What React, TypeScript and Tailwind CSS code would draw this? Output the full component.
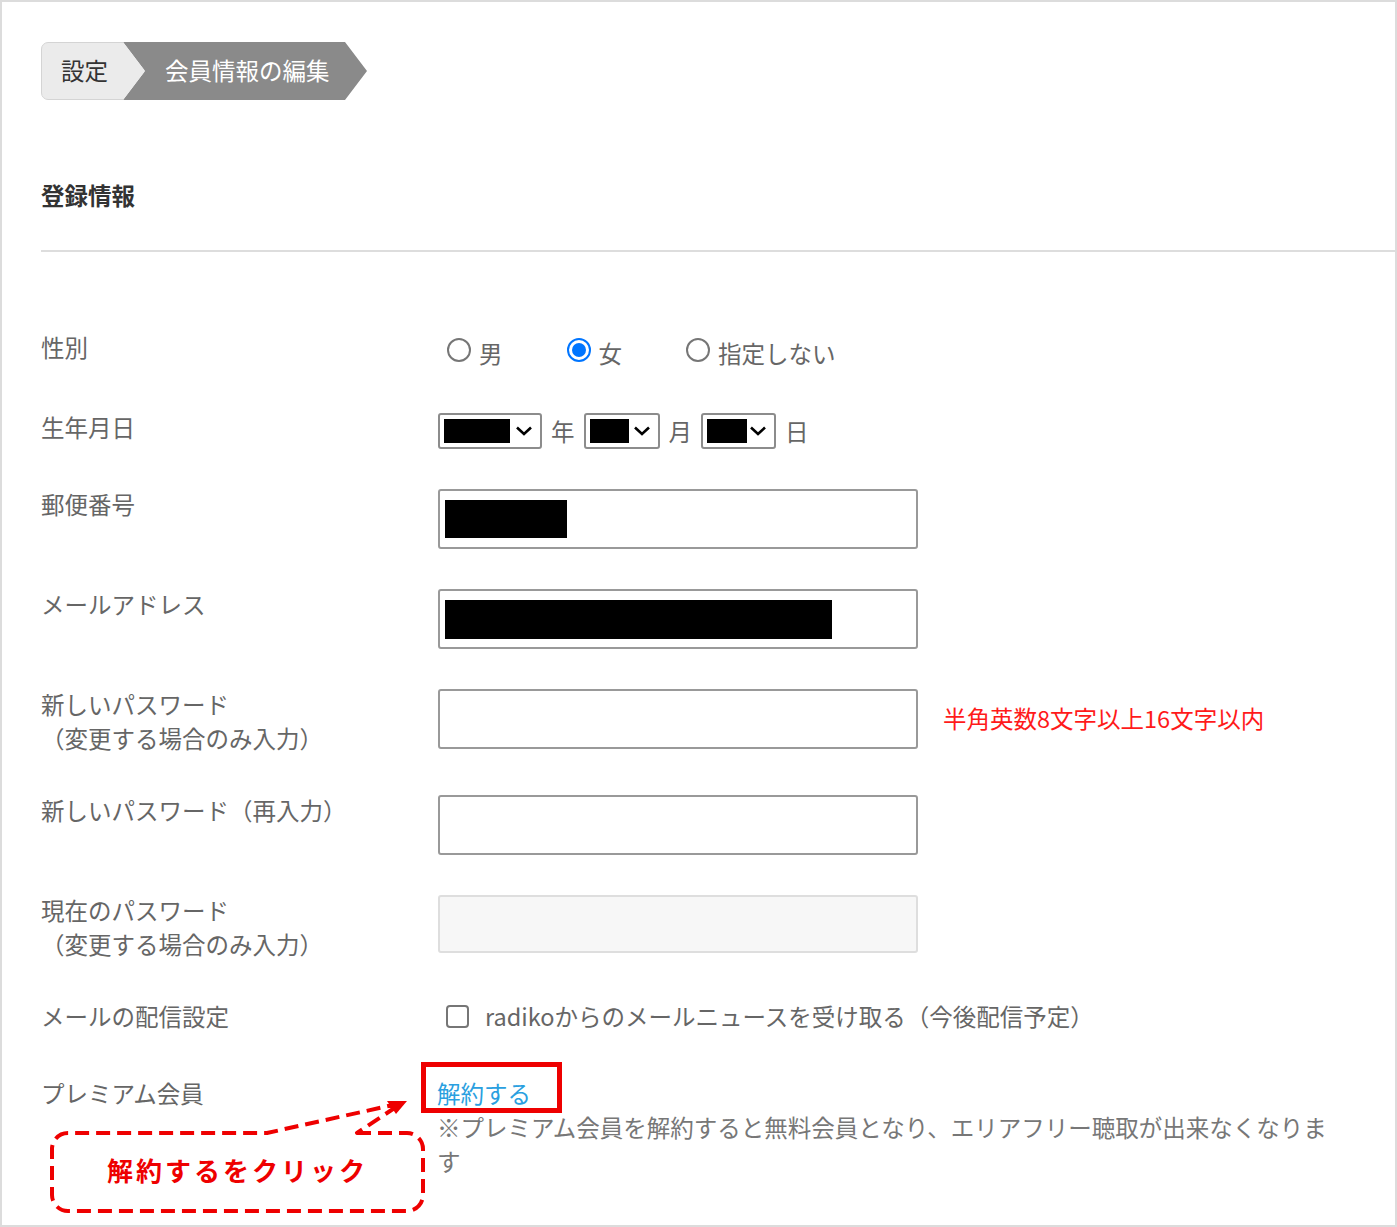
import React from 'react';

const Radio: React.FC<{ label: string; checked?: boolean }> = ({ label, checked }) => (
  <label className="flex items-center gap-[8px]">
    {checked ? (
      <span className="flex h-[24px] w-[24px] items-center justify-center rounded-full border-2 border-[#0075ff] bg-white">
        <span className="h-[14px] w-[14px] rounded-full bg-[#0075ff]" />
      </span>
    ) : (
      <span className="h-[24px] w-[24px] rounded-full border-2 border-[#767676] bg-white" />
    )}
    <span className="mt-[6px]">{label}</span>
  </label>
);

const Chevron = () => (
  <svg width="18" height="12" viewBox="0 0 18 12" className="shrink-0">
    <path d="M2 2.5 L9 9 L16 2.5" fill="none" stroke="#000" strokeWidth="2.6" />
  </svg>
);

const FakeSelect: React.FC<{ width: string; fill: string }> = ({ width, fill }) => (
  <div className={`${width} flex h-[36px] items-center justify-between rounded-[3px] border-2 border-[#8c8c8c] bg-white pl-[4px] pr-[7px]`}>
    <div className={`${fill} h-[24px] bg-black`} />
    <Chevron />
  </div>
);

const Field: React.FC<{ children?: React.ReactNode; disabled?: boolean }> = ({ children, disabled }) => (
  <div
    className={
      disabled
        ? 'mt-[2px] h-[58px] w-[480px] rounded-[3px] border-2 border-[#dedede] bg-[#f7f7f7]'
        : 'mt-[2px] flex h-[60px] w-[480px] items-center rounded-[3px] border-2 border-[#999] bg-white px-[5px]'
    }
  >
    {children}
  </div>
);

const Row: React.FC<{ label: React.ReactNode; children: React.ReactNode; className?: string }> = ({
  label,
  children,
  className,
}) => (
  <div className={`flex items-start ${className ?? ''}`}>
    <div className="w-[397px] shrink-0">{label}</div>
    <div className="relative flex-1">{children}</div>
  </div>
);

export default function App() {
  return (
    <div className="relative h-[1227px] w-[1397px] border-2 border-[#dcdcdc] bg-white font-['Noto_Sans_CJK_JP','Noto_Sans',sans-serif] text-[23.5px] leading-[34px] text-[#666]">
      <div className="pl-[39px] pt-[40px]">
        {/* breadcrumb */}
        <div className="flex h-[58px]">
          <div className="relative z-10 flex h-[58px] w-[104px] items-center rounded-l-[7px] border border-[#d4d4d4] bg-[#ebebeb] pb-[2px] pl-[19px] text-[#333] [clip-path:polygon(0_0,calc(100%_-_22px)_0,100%_50%,calc(100%_-_22px)_100%,0_100%)]">
            設定
          </div>
          <div className="ml-[-22px] flex h-[58px] w-[244px] items-center bg-[#8a8a8a] pb-[2px] pl-[42px] text-white [clip-path:polygon(0_0,calc(100%_-_22px)_0,100%_50%,calc(100%_-_22px)_100%,0_100%,22px_50%)]">
            会員情報の編集
          </div>
        </div>

        <h2 className="mt-[78px] font-bold text-[#333]">登録情報</h2>
        <div className="mt-[38px] h-[2px] bg-[#dddddd]" />

        <div className="mt-[78px] flex flex-col gap-[38px]">
          <Row label="性別">
            <div className="ml-[9px] flex gap-[64px]">
              <Radio label="男" />
              <Radio label="女" checked />
              <Radio label="指定しない" />
            </div>
          </Row>

          <Row label="生年月日" className="mt-[2px]">
            <div className="mt-[3px] flex items-center gap-[9px]">
              <FakeSelect width="w-[104px]" fill="w-[66px]" />
              <span>年</span>
              <FakeSelect width="w-[76px]" fill="w-[39px]" />
              <span>月</span>
              <FakeSelect width="w-[75px]" fill="w-[40px]" />
              <span>日</span>
            </div>
          </Row>

          <Row label="郵便番号">
            <Field>
              <div className="h-[38px] w-[122px] bg-black" />
            </Field>
          </Row>

          <Row label="メールアドレス">
            <Field>
              <div className="h-[39px] w-[387px] bg-black" />
            </Field>
          </Row>

          <Row
            label={
              <>
                新しいパスワード
                <br />
                （変更する場合のみ入力）
              </>
            }
          >
            <div className="flex items-center">
              <Field />
              <span className="ml-[25px] text-[#ff1a1a]">半角英数8文字以上16文字以内</span>
            </div>
          </Row>

          <Row label="新しいパスワード（再入力）">
            <Field />
          </Row>

          <Row
            label={
              <>
                現在のパスワード
                <br />
                （変更する場合のみ入力）
              </>
            }
          >
            <Field disabled />
          </Row>

          <Row label="メールの配信設定">
            <label className="ml-[8px] flex items-center gap-[16px]">
              <span className="h-[23px] w-[23px] rounded-[4px] border-2 border-[#767676] bg-white" />
              <span>radikoからのメールニュースを受け取る（今後配信予定）</span>
            </label>
          </Row>

          <Row label="プレミアム会員" className="mt-[5px]">
            <div className="ml-[-1px]">
              <a className="text-[#2a9fe0]">解約する</a>
              <p className="text-[#777]">
                ※プレミアム会員を解約すると無料会員となり、エリアフリー聴取が出来なくなりま
                <br />す
              </p>
            </div>
            <div className="pointer-events-none absolute left-[-17px] top-[-14px] h-[51px] w-[141px] border-[5px] border-[#ee0000]" />
          </Row>
        </div>
      </div>

      {/* callout annotation */}
      <svg
        className="pointer-events-none absolute left-[48px] top-[1095px]"
        width="380"
        height="122"
        viewBox="0 0 380 122"
      >
        <path
          d="M307 36 L357 36 A16 16 0 0 1 373 52 L373 98 A16 16 0 0 1 357 114 L18 114 A16 16 0 0 1 2 98 L2 52 A16 16 0 0 1 18 36 L217 36 L352 6 Z"
          fill="none"
          stroke="#ee0000"
          strokeWidth="4"
          strokeDasharray="14 7"
          strokeLinejoin="round"
        />
        <path d="M357 4 L337 4 L346 17 Z" fill="#ee0000" />
      </svg>
      <div className="absolute left-[50px] top-[1129px] flex h-[78px] w-[371px] items-center justify-center text-[26px] font-bold tracking-[3px] text-[#ee0000]">
        解約するをクリック
      </div>
    </div>
  );
}
